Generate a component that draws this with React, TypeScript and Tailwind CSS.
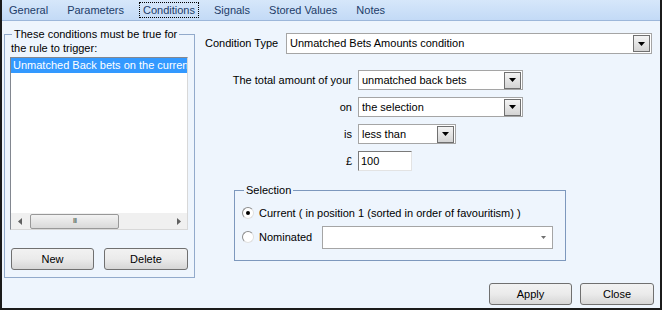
import React from 'react';

const font = { fontFamily: '"Liberation Sans", Arial, sans-serif' };

const DropArrow: React.FC = () => (
  <div className="w-[17px] h-[17px] border border-[#707070] bg-gradient-to-b from-[#f4f4f4] to-[#d4d4d4] flex items-center justify-center shrink-0">
    <svg width="7" height="4" viewBox="0 0 7 4">
      <path d="M0 0h7L3.5 4z" fill="#000" />
    </svg>
  </div>
);

const Combo: React.FC<{ value: string; width: string }> = ({ value, width }) => (
  <div className={`${width} h-[20px] border border-[#a5a5a5] bg-white flex items-center justify-between pl-[3px] pr-px`}>
    <span className="text-[11px] text-black truncate">{value}</span>
    <DropArrow />
  </div>
);

const Button: React.FC<{ label: string; width: string }> = ({ label, width }) => (
  <div className={`${width} h-[22px] rounded-[3px] border border-[#707070] bg-gradient-to-b from-[#f2f2f2] via-[#ebebeb] to-[#d6d6d6] flex items-center justify-center text-[11px] text-black`}>
    {label}
  </div>
);

const Radio: React.FC<{ checked?: boolean }> = ({ checked }) => (
  <div className="w-[12px] h-[12px] rounded-full border border-[#8c8c8c] border-b-[#e0e0e0] border-r-[#e0e0e0] bg-white flex items-center justify-center shrink-0">
    {checked && <div className="w-[4px] h-[4px] rounded-full bg-black" />}
  </div>
);

const tabs = ['General', 'Parameters', 'Conditions', 'Signals', 'Stored Values', 'Notes'];

export default function App() {
  return (
    <div
      className="w-[662px] h-[310px] flex flex-col bg-[#eef5fd] border-l-2 border-r-2 border-b-2 border-[#1b1b1b] overflow-hidden"
      style={font}
    >
      {/* Tab strip */}
      <div className="h-[21px] shrink-0 bg-gradient-to-b from-[#d6e7fa] to-[#c3daf6] border-b border-[#9db7da] flex items-stretch gap-[3px]">
        {tabs.map((t) => (
          <div
            key={t}
            className={`flex items-center px-[3px] mx-[4px] first:ml-[3px] text-[11px] text-[#1d3c68] ${
              t === 'Conditions' ? 'border border-dotted border-black my-[2px]' : 'border border-transparent'
            }`}
          >
            {t}
          </div>
        ))}
      </div>

      {/* Page */}
      <div className="flex-1 flex">
        {/* Conditions list */}
        <fieldset className="ml-[2px] mt-[6px] w-[191px] h-[251px] border border-[#92aacb] px-[5px] pb-0 flex flex-col">
          <legend className="px-[2px] ml-[2px] text-[11px] text-black leading-[14px]">
            These conditions must be true for
          </legend>
          <div className="text-[11px] text-black leading-[14px] pl-[1px]">the rule to trigger:</div>
          <div className="mt-[2px] w-[178px] h-[173px] border border-[#828790] border-b-[#d8d8d8] border-r-[#d8d8d8] bg-white flex flex-col">
            <div className="h-[15px] bg-[#3399ff] text-white text-[11px] leading-[15px] pl-[2px] whitespace-nowrap overflow-hidden">
              Unmatched Back bets on the current
            </div>
            <div className="flex-1" />
            {/* horizontal scrollbar */}
            <div className="h-[16px] bg-[#f0f0f0] flex items-center">
              <div className="w-[17px] flex items-center justify-center">
                <svg width="4" height="7" viewBox="0 0 4 7">
                  <path d="M4 0v7L0 3.5z" fill="#606060" />
                </svg>
              </div>
              <div className="ml-[2px] w-[89px] h-[15px] rounded-[2px] border border-[#989898] bg-gradient-to-b from-[#f3f3f3] to-[#d9d9d9] flex items-center justify-center">
                <span className="text-[8px] text-[#606060] tracking-[-1px] leading-none">III</span>
              </div>
              <div className="flex-1" />
              <div className="w-[17px] flex items-center justify-center">
                <svg width="4" height="7" viewBox="0 0 4 7">
                  <path d="M0 0v7L4 3.5z" fill="#606060" />
                </svg>
              </div>
            </div>
          </div>
          <div className="mt-[18px] flex justify-between pl-px pr-[1px]">
            <Button label="New" width="w-[83px]" />
            <Button label="Delete" width="w-[84px]" />
          </div>
        </fieldset>

        {/* Condition editor */}
        <div className="ml-[10px] flex flex-col">
          <div className="mt-[12px] flex items-center">
            <span className="text-[11px] text-black w-[81px]">Condition Type</span>
            <div className="w-[366px] h-[21px] border border-[#a5a5a5] bg-white flex items-center justify-between pl-[3px] pr-px">
              <span className="text-[11px] text-black">Unmatched Bets Amounts condition</span>
              <DropArrow />
            </div>
          </div>

          <div className="mt-[16px] flex flex-col gap-[7px]">
            <div className="flex items-center">
              <span className="w-[153px] text-right pr-[6px] text-[11px] text-black">The total amount of your</span>
              <Combo value="unmatched back bets" width="w-[165px]" />
            </div>
            <div className="flex items-center">
              <span className="w-[153px] text-right pr-[6px] text-[11px] text-black">on</span>
              <Combo value="the selection" width="w-[165px]" />
            </div>
            <div className="flex items-center">
              <span className="w-[153px] text-right pr-[6px] text-[11px] text-black">is</span>
              <Combo value="less than" width="w-[98px]" />
            </div>
            <div className="flex items-center">
              <span className="w-[153px] text-right pr-[6px] text-[11px] text-black">£</span>
              <div className="w-[54px] h-[20px] border border-[#7a7a7a] border-b-[#e3e3e3] border-r-[#e3e3e3] bg-white flex items-center pl-[2px] text-[11px] text-black">
                100
              </div>
            </div>
          </div>

          {/* Selection group */}
          <fieldset className="ml-[29px] mt-[12px] w-[332px] h-[78px] border border-[#7d98bd] px-[7px] flex flex-col">
            <legend className="ml-[2px] px-[2px] text-[11px] text-black leading-[14px]">Selection</legend>
            <div className="mt-[8px] flex items-center gap-[5px]">
              <Radio checked />
              <span className="text-[11px] text-black">Current ( in position 1 (sorted in order of favouritism) )</span>
            </div>
            <div className="mt-[4px] flex items-center">
              <Radio />
              <span className="ml-[5px] w-[63px] text-[11px] text-black">Nominated</span>
              <div className="w-[231px] h-[23px] border border-[#a5a5a5] bg-white flex items-center justify-end pr-[6px]">
                <svg width="5" height="3" viewBox="0 0 5 3">
                  <path d="M0 0h5L2.5 3z" fill="#707070" />
                </svg>
              </div>
            </div>
          </fieldset>
        </div>
      </div>

      {/* Bottom buttons */}
      <div className="h-[31px] shrink-0 flex items-start justify-end gap-[8px] pr-[6px] pt-[5px]">
        <Button label="Apply" width="w-[83px]" />
        <Button label="Close" width="w-[74px]" />
      </div>
    </div>
  );
}
